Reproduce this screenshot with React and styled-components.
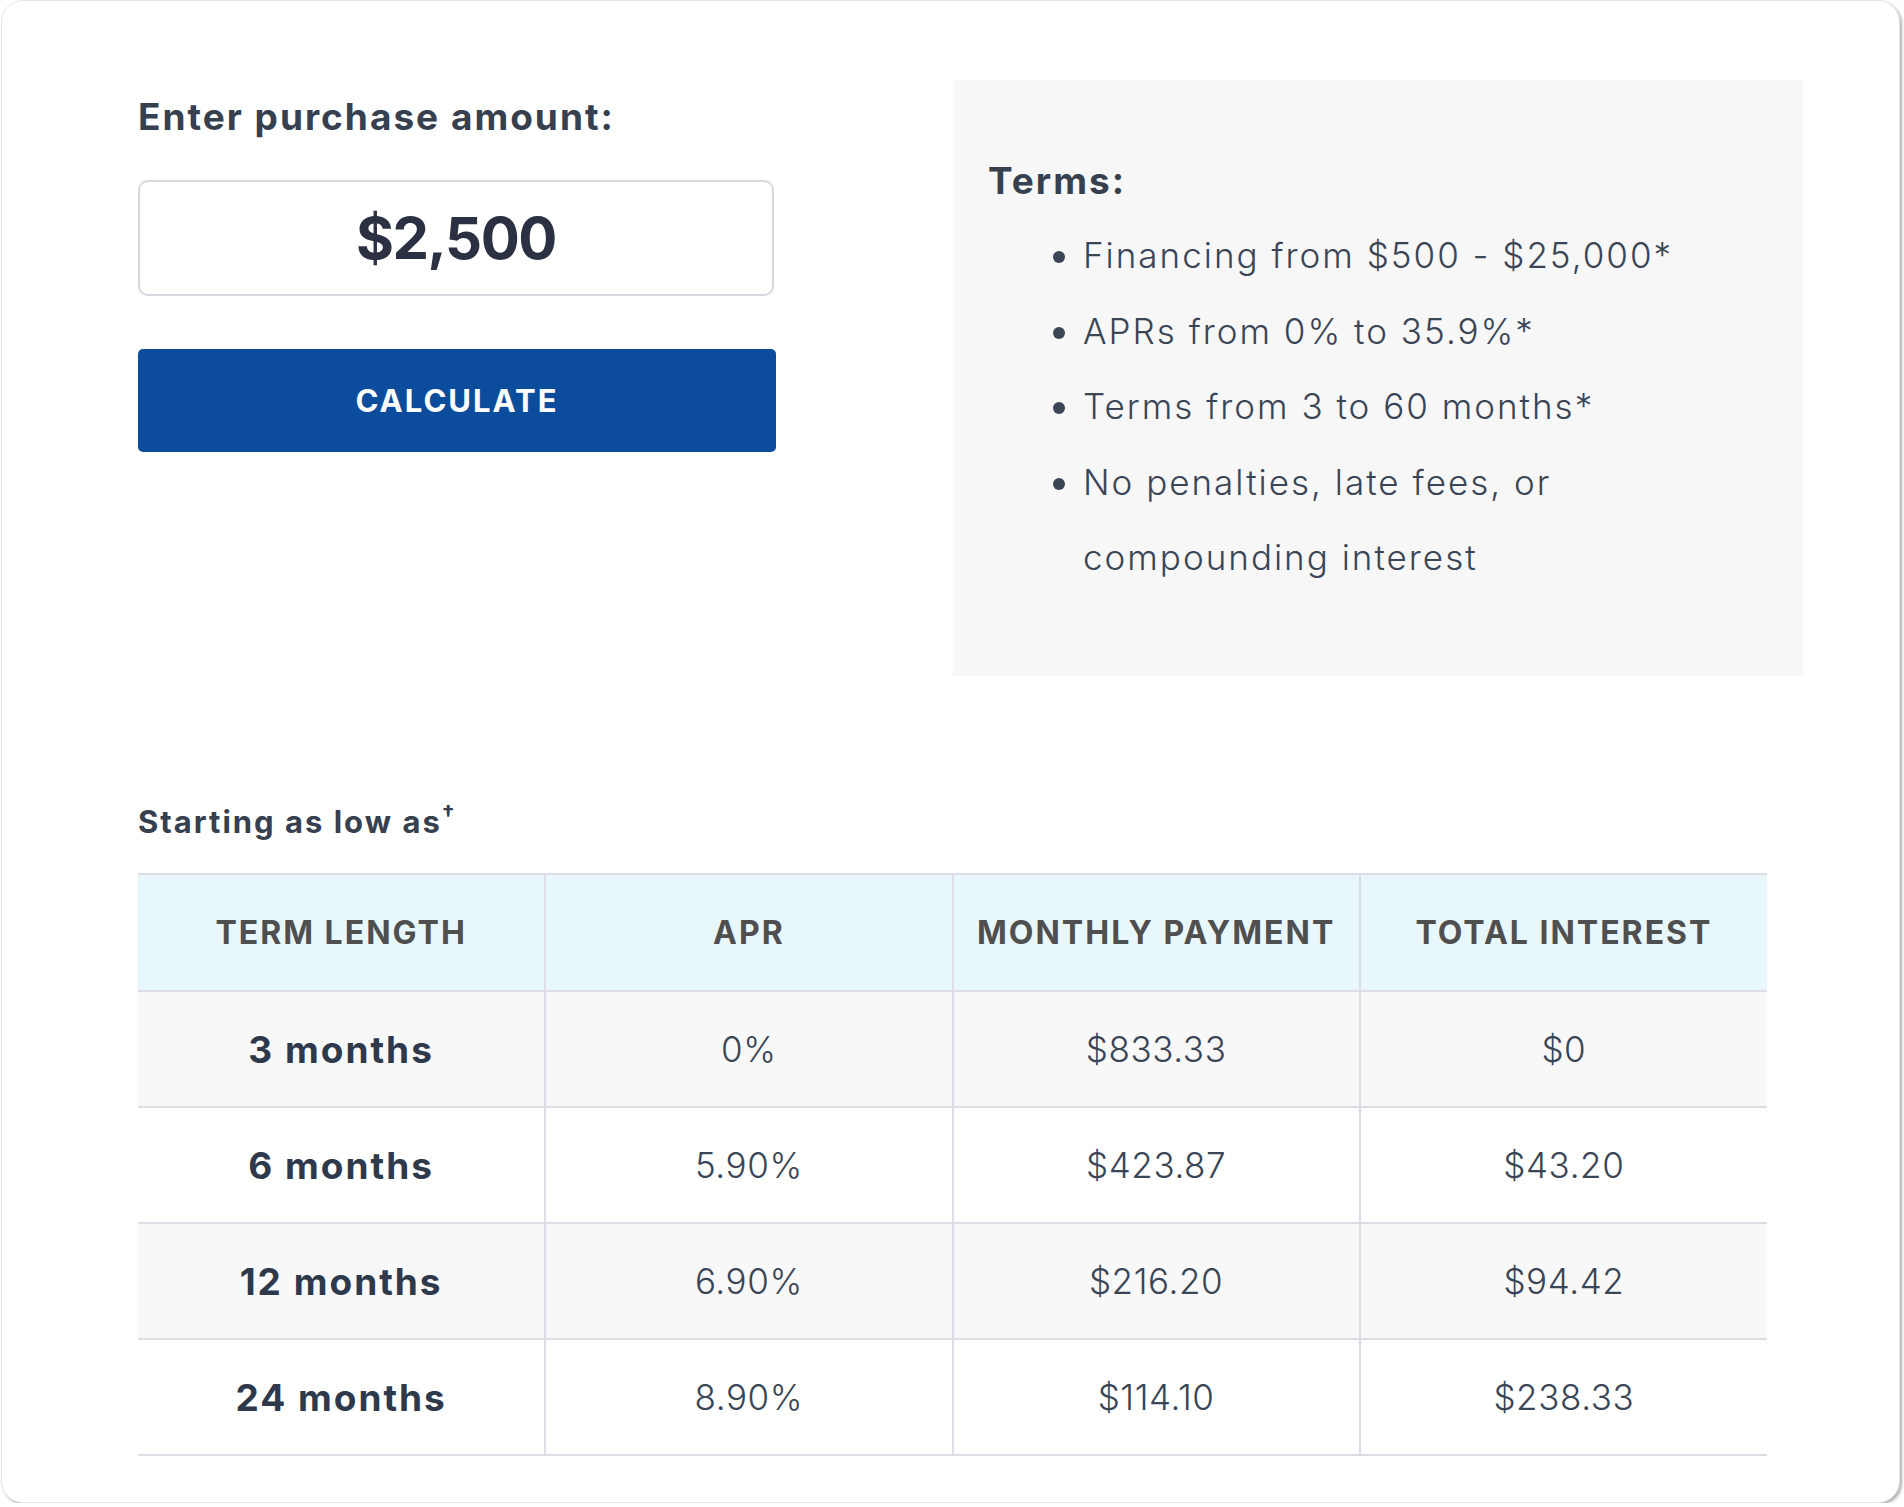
import React from "react";
import styled, { createGlobalStyle } from "styled-components";

const GlobalStyle = createGlobalStyle`
  html, body {
    margin: 0;
    padding: 0;
    background: #ffffff;
  }
  body {
    font-family: Inter, "Open Sans", "Liberation Sans", sans-serif;
    color: #2e3a4c;
  }
`;

const Card = styled.div`
  box-sizing: border-box;
  width: 1899px;
  height: 1503px;
  margin-left: 1px;
  background: #fff;
  border: 1px solid #e6e6e6;
  border-radius: 22px;
  box-shadow: 2px 2px 3px rgba(0, 0, 0, 0.3);
  padding: 79px 0 0 136px;
`;

const TopSection = styled.div`
  display: grid;
  grid-template-columns: 640px 850px;
  column-gap: 175px;
  align-items: start;
`;

const LeftColumn = styled.div`
  display: flex;
  flex-direction: column;
  padding-top: 15px;
`;

const Heading = styled.h2`
  margin: 0;
  font-size: 37px;
  line-height: 44px;
  font-weight: 700;
  letter-spacing: 2px;
  color: #36404f;
`;

const AmountBox = styled.div`
  box-sizing: border-box;
  margin-top: 41px;
  width: 636px;
  height: 116px;
  border: 2px solid #d8d8e2;
  border-radius: 10px;
  display: flex;
  align-items: center;
  justify-content: center;
  font-size: 58px;
  font-weight: 700;
  color: #2b3042;
  letter-spacing: -1.5px;
`;

const CalcButton = styled.button`
  margin-top: 53px;
  width: 638px;
  height: 103px;
  border: none;
  border-radius: 5px;
  background: #0b4d9c;
  color: #fff;
  font-family: inherit;
  font-size: 31px;
  font-weight: 700;
  letter-spacing: 2px;
  cursor: pointer;
`;

const TermsPanel = styled.div`
  box-sizing: border-box;
  height: 596px;
  background: #f7f7f7;
  padding: 79px 40px 0 35px;
`;

const TermsList = styled.ul`
  margin: 15px 0 0 0;
  padding: 0 0 0 95px;
  list-style: disc;
`;

const TermsItem = styled.li`
  font-size: 35px;
  line-height: 75.5px;
  font-weight: 300;
  letter-spacing: 2px;
  color: #3a4556;
  &::marker {
    font-size: 36px;
  }
`;

const Subheading = styled.div`
  margin-top: 128px;
  font-size: 31px;
  line-height: 36px;
  font-weight: 700;
  letter-spacing: 2px;
  color: #36404f;
  sup {
    font-size: 22px;
    line-height: 0;
    vertical-align: 12px;
    margin-left: 0;
  }
`;

const Table = styled.table`
  margin-top: 33px;
  width: 1629px;
  border-collapse: collapse;
  table-layout: fixed;
  border-top: 2px solid #dcdde5;
`;

const HeadCell = styled.th`
  height: 115px;
  padding: 0;
  background: #e8f7fb;
  color: #4f4f4f;
  font-size: 32px;
  font-weight: 700;
  letter-spacing: 2px;
  text-transform: uppercase;
  text-align: center;
  border-bottom: 2px solid #dcdde5;
  & + & {
    border-left: 2px solid #dcdde5;
  }
`;

const Row = styled.tr`
  background: ${(p) => (p.$shaded ? "#f8f8f8" : "#ffffff")};
`;

const Cell = styled.td`
  height: 114px;
  padding: 0;
  text-align: center;
  font-size: ${(p) => (p.$strong ? "37px" : "35px")};
  font-weight: ${(p) => (p.$strong ? 700 : 300)};
  letter-spacing: ${(p) => (p.$strong ? "2px" : "0.6px")};
  color: ${(p) => (p.$strong ? "#2e3a4c" : "#3a4556")};
  border-bottom: 2px solid #dcdde5;
  & + & {
    border-left: 2px solid #dcdde5;
  }
`;

const rows = [
  ["3 months", "0%", "$833.33", "$0"],
  ["6 months", "5.90%", "$423.87", "$43.20"],
  ["12 months", "6.90%", "$216.20", "$94.42"],
  ["24 months", "8.90%", "$114.10", "$238.33"],
];

export default function App() {
  return (
    <>
      <GlobalStyle />
      <Card>
        <TopSection>
          <LeftColumn>
            <Heading>Enter purchase amount:</Heading>
            <AmountBox>$2,500</AmountBox>
            <CalcButton>CALCULATE</CalcButton>
          </LeftColumn>
          <TermsPanel>
            <Heading>Terms:</Heading>
            <TermsList>
              <TermsItem>Financing from $500 - $25,000*</TermsItem>
              <TermsItem>APRs from 0% to 35.9%*</TermsItem>
              <TermsItem>Terms from 3 to 60 months*</TermsItem>
              <TermsItem>
                No penalties, late fees, or
                <br />
                compounding interest
              </TermsItem>
            </TermsList>
          </TermsPanel>
        </TopSection>
        <Subheading>
          Starting as low as<sup>†</sup>
        </Subheading>
        <Table>
          <thead>
            <tr>
              <HeadCell>Term Length</HeadCell>
              <HeadCell>APR</HeadCell>
              <HeadCell>Monthly Payment</HeadCell>
              <HeadCell>Total Interest</HeadCell>
            </tr>
          </thead>
          <tbody>
            {rows.map((r, i) => (
              <Row key={r[0]} $shaded={i % 2 === 0}>
                {r.map((c, j) => (
                  <Cell key={j} $strong={j === 0}>
                    {c}
                  </Cell>
                ))}
              </Row>
            ))}
          </tbody>
        </Table>
      </Card>
    </>
  );
}
